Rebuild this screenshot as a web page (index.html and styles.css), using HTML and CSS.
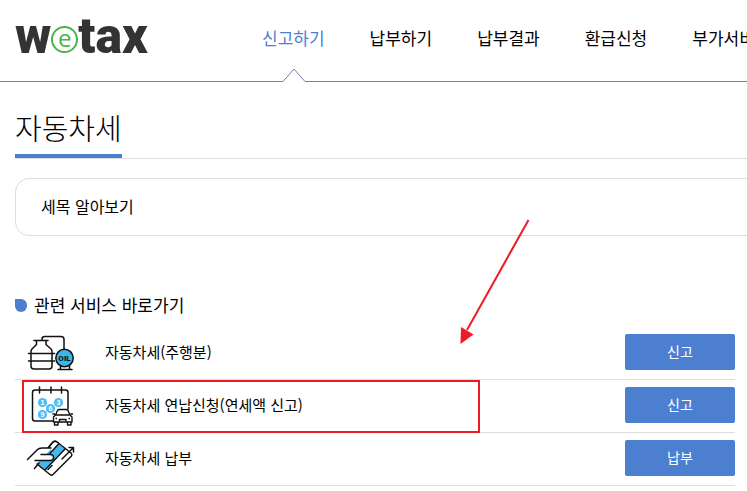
FILE: index.html
```html
<!DOCTYPE html>
<html lang="ko">
<head>
<meta charset="utf-8">
<meta name="viewport" content="width=device-width, initial-scale=1">
<title>자동차세</title>
<link rel="stylesheet" href="styles.css">
</head>
<body>
<header class="header">
  <a class="logo" href="#"><span>w</span><span class="logo-e">e</span><span>tax</span></a>
  <nav class="nav">
    <a class="active" href="#">신고하기
      <svg class="notch" width="24" height="14" viewBox="0 0 24 14" aria-hidden="true"><path d="M0 14L1 13.500L12 1L23 13.500L24 14Z" fill="#fff"/><path d="M0 13.500H1L12 1L23 13.500H24" fill="none" stroke="#7381ab"/></svg>
    </a>
    <a href="#">납부하기</a>
    <a href="#">납부결과</a>
    <a href="#">환급신청</a>
    <a href="#">부가서비스</a>
  </nav>
</header>
<main class="main">
  <div class="title-bar"><h1>자동차세</h1></div>
  <section class="panel"><h2>세목 알아보기</h2></section>
  <section class="services">
    <h2>관련 서비스 바로가기</h2>
    <ul>
      <li>
        <svg class="icon" width="80" height="44" viewBox="0 0 80 44" aria-hidden="true">
          <g fill="none" stroke="#111" stroke-width="1.500" stroke-linecap="round" stroke-linejoin="round">
            <path d="M27 10V9Q27 6.500 30 6.500H46Q49 6.500 49 9.500V20M19 10.500H33M21.500 10.500V14.500L17 19Q16 20 16 21.500V36Q16 39 19 39H34Q37 39 37 36V21.500Q37 20 36 19L31 14.500V10.500M13.500 23.500H39.500M13.500 31H39.500M43 39.500H57M45.500 39V35M54.500 39V35"/>
            <circle cx="49.500" cy="28" r="8.700" fill="#3bb5ef"/>
          </g>
          <text class="oil" x="49.500" y="30.500" text-anchor="middle">OIL</text>
        </svg>
        <span class="name">자동차세(주행분)</span>
        <button type="button">신고</button>
      </li>
      <li class="marked">
        <svg class="icon" width="80" height="44" viewBox="0 0 80 44" aria-hidden="true">
          <path d="M38 38H20Q17.500 38 17.500 35.500V9.500Q17.500 7 20 7H50.500Q53 7 53 9.500V26M24.500 4V10M36 4V10M46.500 4V10" fill="none" stroke="#111" stroke-width="1.500" stroke-linecap="round"/>
          <g fill="#4dbdf5"><circle cx="27.500" cy="19.500" r="4.600"/><circle cx="43.500" cy="19.500" r="4.600"/><circle cx="35.500" cy="25.500" r="4.600"/><circle cx="27.500" cy="31.500" r="4.600"/></g>
          <g class="day" text-anchor="middle"><text x="27.500" y="22">1</text><text x="43.500" y="22">3</text><text x="35.500" y="28">6</text><text x="27.500" y="34">9</text></g>
          <g fill="#fff" stroke="#111" stroke-width="1.400" stroke-linejoin="round">
            <path d="M39.500 38V42H43V38M52.500 38V42H56V38"/>
            <path d="M40.500 32L42.500 27.500Q43 26.500 44.500 26.500H51Q52.500 26.500 53 27.500L55 32L57 34V39H38.500V34ZM40.500 32H55M37.500 31H40M55.500 31H58M44.500 39V36.500H51V39"/>
            <path d="M40.500 35.500H42M53.500 35.500H55"/>
          </g>
        </svg>
        <span class="name">자동차세 연납신청(연세액 신고)</span>
        <button type="button">신고</button>
      </li>
      <li>
        <svg class="icon" width="80" height="44" viewBox="0 0 80 44" aria-hidden="true">
          <g stroke="#111" stroke-width="1.500" stroke-linecap="round" stroke-linejoin="round">
            <path d="M37 7Q39 5 41 7L56 17Q58 18.500 56.500 20.500L38 38.500Q36.500 40 35 38.500L20 27Z" fill="#fff" stroke="none"/>
            <path d="M43 8L50 13L30 34L22 27.500L38 11Z" fill="#45b8f2" stroke="none"/>
            <path d="M33 12L38 6Q40 4.500 42 6L56 17Q57.500 18.500 56.500 20L38 38.500Q36.500 40 35 38.500L22 28M50 13L30 34" fill="none"/>
            <path d="M36 12L41 6L44 8L36 17Z" fill="#fff" stroke="none"/>
            <path d="M12.500 23.500L22 14Q24 12 27 12H36L30 18.500H35Q38.500 18.500 38.500 21.500Q38.500 24.500 35 24.500H20Z" fill="#fff" stroke="none"/>
            <path d="M33 12L38 6Q40 4.500 42 6L44 7.500L34 18.500M12.500 23.500L22 14Q24 12 27 12H36M26 18.500H35Q38.500 18.500 38.500 21.500Q38.500 24.500 35 24.500H20M24 27L19.500 32.500M33 33.500L37 29.500M47 23L58.500 11.500M54 11.500H58.500V16" fill="none"/>
          </g>
        </svg>
        <span class="name">자동차세 납부</span>
        <button type="button">납부</button>
      </li>
    </ul>
    <svg class="pointer" width="72" height="128" viewBox="0 0 72 128" aria-hidden="true"><path d="M69.500 1L8 111" stroke="#ed1c24" stroke-width="2"/><path d="M1.500 125L2 108L14.500 115.500Z" fill="#ed1c24"/></svg>
  </section>
</main>
</body>
</html>
```
FILE: styles.css
```css
*, *::before, *::after { box-sizing: border-box; }

body {
  margin: 0;
  overflow: hidden;
  background: #fff;
  color: #000;
  font-family: "Noto Sans CJK KR", sans-serif;
}

h1, h2, ul { margin: 0; padding: 0; }
a { color: inherit; text-decoration: none; }

.header {
  display: flex;
  align-items: center;
  height: 82px;
  padding: 0 0 6px 15px;
  border-bottom: 1px solid #7381ab;
}

.logo {
  display: flex;
  flex: none;
  align-items: center;
  width: 247px;
  padding-bottom: 3px;
  color: #333;
  font: 900 50px/64px Roboto, sans-serif;
}

.logo-e {
  width: 27px;
  height: 27px;
  margin-top: 6px;
  border: 2px solid #45b549;
  border-radius: 50%;
  color: #45b549;
  font: 400 24px/20px "Open Sans", sans-serif;
  text-align: center;
}

.nav {
  display: flex;
  gap: 45px;
  font-size: 17px;
  font-weight: 400;
  line-height: 26px;
  white-space: nowrap;
}

.nav a { position: relative; }
.nav .active { color: #4d7fd0; }

.notch {
  position: absolute;
  top: 43px;
  left: 20px;
}

.main { padding-left: 15px; }

.title-bar {
  display: flex;
  height: 77px;
  border-bottom: 1px solid #ddd;
}

h1 {
  padding-top: 23px;
  border-bottom: 4px solid #4d7fd0;
  font-size: 29px;
  font-weight: 300;
  line-height: 44px;
}

.panel {
  margin: 19px -20px 0 0;
  padding: 14px 25px 16px;
  border: 1px solid #ddd;
  border-radius: 14px;
}

.panel h2 {
  font-size: 16px;
  font-weight: 400;
  line-height: 26px;
}

.services {
  position: relative;
  margin: 57px 12px 0 0;
}

.services h2 {
  display: flex;
  align-items: center;
  gap: 7px;
  font-size: 17px;
  font-weight: 400;
  line-height: 24px;
}

.services h2::before {
  content: "";
  width: 12px;
  height: 13px;
  border-radius: 0 6px 6px 6px;
  background: #4d7fd0;
}

.services ul {
  padding-top: 10px;
  list-style: none;
}

.services li {
  position: relative;
  display: flex;
  align-items: center;
  padding: 3px 0 5px;
  border-bottom: 1px solid #ddd;
}

.icon {
  flex: none;
  margin-right: 10px;
}

.oil { fill: #111; font: 900 8px Roboto, sans-serif; }
.day { fill: #fff; font: 700 7px "Liberation Sans", sans-serif; }

.name {
  flex: 1;
  font-size: 15px;
  line-height: 24px;
}

.services button {
  width: 110px;
  height: 36px;
  padding: 0 0 2px;
  border: 0;
  border-radius: 2px;
  background: #4d7fd0;
  color: #fff;
  font: 400 14px/20px "Noto Sans CJK KR", sans-serif;
}

.marked::after {
  content: "";
  position: absolute;
  top: 0;
  left: 7px;
  width: 458px;
  height: 53px;
  border: 2px solid #ed1c24;
}

.pointer {
  position: absolute;
  top: -74px;
  left: 444px;
}
```
